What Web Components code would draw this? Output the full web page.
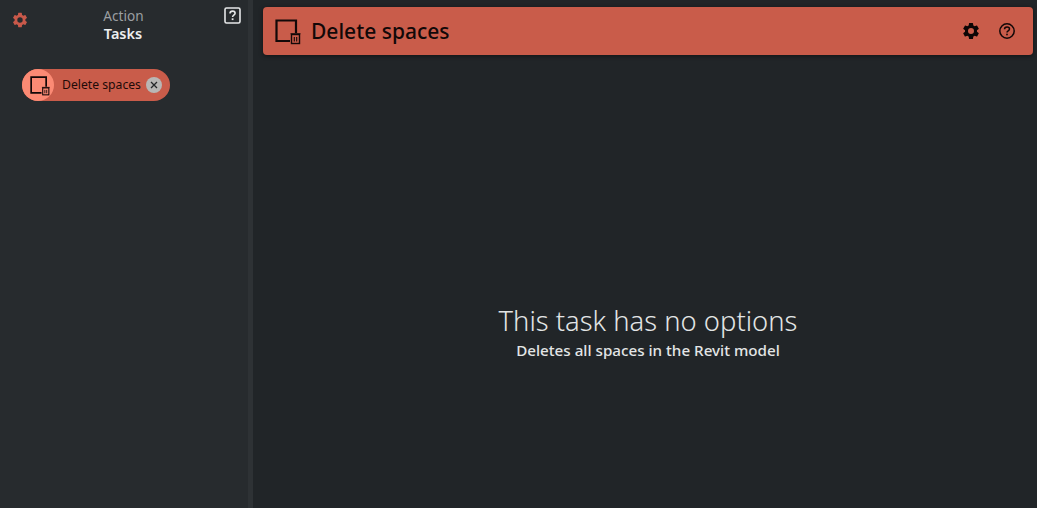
<!DOCTYPE html>
<html>
<head>
<meta charset="utf-8">
<style>
html, body { margin: 0; height: 100%; background: #212528; overflow: hidden; }
body { font-family: "Noto Sans", "Open Sans", sans-serif; }
</style>
</head>
<body>
<app-shell>
    <task-sidebar slot="side" group="Action" name="Tasks">
        <task-pill>Delete spaces</task-pill>
    </task-sidebar>
    <task-header slot="head">Delete spaces</task-header>
    <empty-note title-text="This task has no options">Deletes all spaces in the Revit model</empty-note>
</app-shell>

<script>
const GEAR = `<path d="M19.14 12.94c.04-.3.06-.61.06-.94 0-.32-.02-.64-.07-.94l2.03-1.58a.49.49 0 0 0 .12-.61l-1.92-3.32a.49.49 0 0 0-.59-.22l-2.39.96a7 7 0 0 0-1.62-.94l-.36-2.54a.48.48 0 0 0-.48-.41h-3.84a.48.48 0 0 0-.47.41l-.36 2.54c-.59.24-1.13.57-1.62.94l-2.39-.96a.48.48 0 0 0-.59.22L2.74 8.87a.48.48 0 0 0 .12.61l2.03 1.58c-.05.3-.09.63-.09.94s.02.64.07.94l-2.03 1.58a.49.49 0 0 0-.12.61l1.92 3.32c.12.22.37.29.59.22l2.39-.96c.5.38 1.03.7 1.62.94l.36 2.54c.05.24.24.41.48.41h3.84c.24 0 .44-.17.47-.41l.36-2.54c.59-.24 1.13-.56 1.62-.94l2.39.96c.22.08.47 0 .59-.22l1.92-3.32a.48.48 0 0 0-.12-.61l-2.01-1.58zM12 15.6A3.6 3.6 0 1 1 12 8.4a3.6 3.6 0 0 1 0 7.2z"/>`;

// square with a small bin in the corner
function taskIcon(size) {
    return `<svg width="${size}" height="${size}" viewBox="0 0 26 26" fill="none" style="display:block">
        <path d="M21 14V1.500H1.500V22H15" stroke="#120808" stroke-width="2.200"/>
        <rect x="16.500" y="15.500" width="8" height="9" stroke="#120808" stroke-width="1.400"/>
        <path d="M15.500 14.800h10M19.300 18v4.500M21.700 18v4.500" stroke="#120808" stroke-width="1.100"/>
    </svg>`;
}

class AppShell extends HTMLElement {
    constructor() {
        super();
        this.attachShadow({ mode: 'open' });
        this.shadowRoot.innerHTML = `
        <style>
            :host { display: grid; grid-template-columns: 248px 5px 1fr; height: 508px; }
            .split { background: #2e3235; }
            main { display: flex; flex-direction: column; padding: 7px 4px 0 10px; min-width: 0; }
        </style>
        <slot name="side"></slot>
        <div class="split"></div>
        <main>
            <slot name="head"></slot>
            <slot></slot>
        </main>`;
    }
}

class TaskSidebar extends HTMLElement {
    constructor() {
        super();
        this.attachShadow({ mode: 'open' });
    }

    connectedCallback() {
        this.shadowRoot.innerHTML = `
        <style>
            :host { display: block; background: #272b2e; }
            header { display: grid; grid-template-columns: 40px 1fr 40px; height: 69px; }
            .gear { padding: 11px 0 0 11px; }
            .gear svg { display: block; fill: #c9594a; }
            .title { text-align: center; padding: 7px 1px 0 0; font-size: 13.600px; line-height: 18px; color: #9b9fa2; }
            .title b { display: block; margin: -1px 1px 0 0; font-weight: 600; font-size: 14.500px; color: #eceeef; }
            .help { padding: 7px 0 0 16px; }
            .help svg { display: block; }
            .list { padding: 0 0 0 22px; }
        </style>
        <header>
            <div class="gear"><svg width="18" height="18" viewBox="0 0 24 24">${GEAR}</svg></div>
            <div class="title">${this.getAttribute('group')}<b>${this.getAttribute('name')}</b></div>
            <div class="help"><svg width="17" height="17" viewBox="0 0 17 17" fill="none">
                <rect x="1" y="1" width="15" height="15" rx="1.500" stroke="#e6e8e9" stroke-width="1.600"/>
                <path d="M6 6.600c0-1.600 1.100-2.500 2.600-2.500s2.500.9 2.500 2.200c0 1.900-2.500 1.900-2.500 3.700" stroke="#e6e8e9" stroke-width="1.600"/>
                <rect x="7.700" y="11.300" width="1.800" height="1.800" fill="#e6e8e9"/>
            </svg></div>
        </header>
        <div class="list"><slot></slot></div>`;
    }
}

class TaskPill extends HTMLElement {
    constructor() {
        super();
        this.attachShadow({ mode: 'open' });
        this.shadowRoot.innerHTML = `
        <style>
            :host { display: inline-flex; align-items: center; height: 32px; width: 148px; box-sizing: border-box;
                    background: #c95c4a; border-radius: 16px; color: #1d0a08; font-size: 12.200px; }
            .ico { width: 32px; height: 32px; border-radius: 50%; background: #fb8a74; display: flex;
                   align-items: center; justify-content: center; flex: none; }
            .ico svg { margin: 2px 0 0 3px; }
            .txt { margin-left: 8px; white-space: nowrap; flex: 1; position: relative; top: -1px; }
            .x { width: 16px; height: 16px; border-radius: 50%; background: #b9b7b5; margin-right: 8px; flex: none;
                 display: flex; align-items: center; justify-content: center; }
            .x svg { display: block; }
        </style>
        <span class="ico">${taskIcon(20)}</span>
        <span class="txt"><slot></slot></span>
        <span class="x"><svg width="8" height="8" viewBox="0 0 8 8"><path d="M1 1l6 6M7 1L1 7" stroke="#26282a" stroke-width="1.300"/></svg></span>`;
    }
}

class TaskHeader extends HTMLElement {
    constructor() {
        super();
        this.attachShadow({ mode: 'open' });
        this.shadowRoot.innerHTML = `
        <style>
            :host { display: flex; align-items: center; height: 48px; flex: none; background: #c95c4a; border-radius: 4px;
                    box-shadow: 0 1px 4px rgba(0,0,0,.5); color: #120808; font-size: 21px; line-height: 28px; font-weight: 500; padding: 0 17px 0 12px; }
            .ico { margin-right: 10px; margin-top: 2px; }
            h1 { font: inherit; margin: 0; flex: 1; }
            .act { display: flex; gap: 17px; align-items: center; }
            .act svg { display: block; }
        </style>
        <span class="ico">${taskIcon(26)}</span>
        <h1><slot></slot></h1>
        <div class="act">
            <svg width="20" height="20" viewBox="0 0 24 24" fill="#0d0606">${GEAR}</svg>
            <svg width="18" height="18" viewBox="0 0 18 18" fill="none">
                <circle cx="9" cy="9" r="7.200" stroke="#120808" stroke-width="1.500"/>
                <path d="M6.500 7.200c0-1.500 1.100-2.300 2.500-2.300s2.500.9 2.500 2.100c0 1.800-2.500 1.700-2.500 3.400" stroke="#120808" stroke-width="1.500"/>
                <rect x="8.200" y="11.700" width="1.600" height="1.600" fill="#120808"/>
            </svg>
        </div>`;
    }
}

class EmptyNote extends HTMLElement {
    constructor() {
        super();
        this.attachShadow({ mode: 'open' });
    }

    connectedCallback() {
        this.shadowRoot.innerHTML = `
        <style>
            :host { display: flex; flex: 1; flex-direction: column; align-items: center; padding-top: 247px; color: #e3e5e6; }
            h2 { margin: 0; font-size: 27.400px; line-height: 38px; font-weight: 300; }
            p { margin: 0; font-size: 15.200px; line-height: 20px; font-weight: 500; }
        </style>
        <h2>${this.getAttribute('title-text')}</h2>
        <p><slot></slot></p>`;
    }
}

customElements.define('app-shell', AppShell);
customElements.define('task-sidebar', TaskSidebar);
customElements.define('task-pill', TaskPill);
customElements.define('task-header', TaskHeader);
customElements.define('empty-note', EmptyNote);
</script>
</body>
</html>
